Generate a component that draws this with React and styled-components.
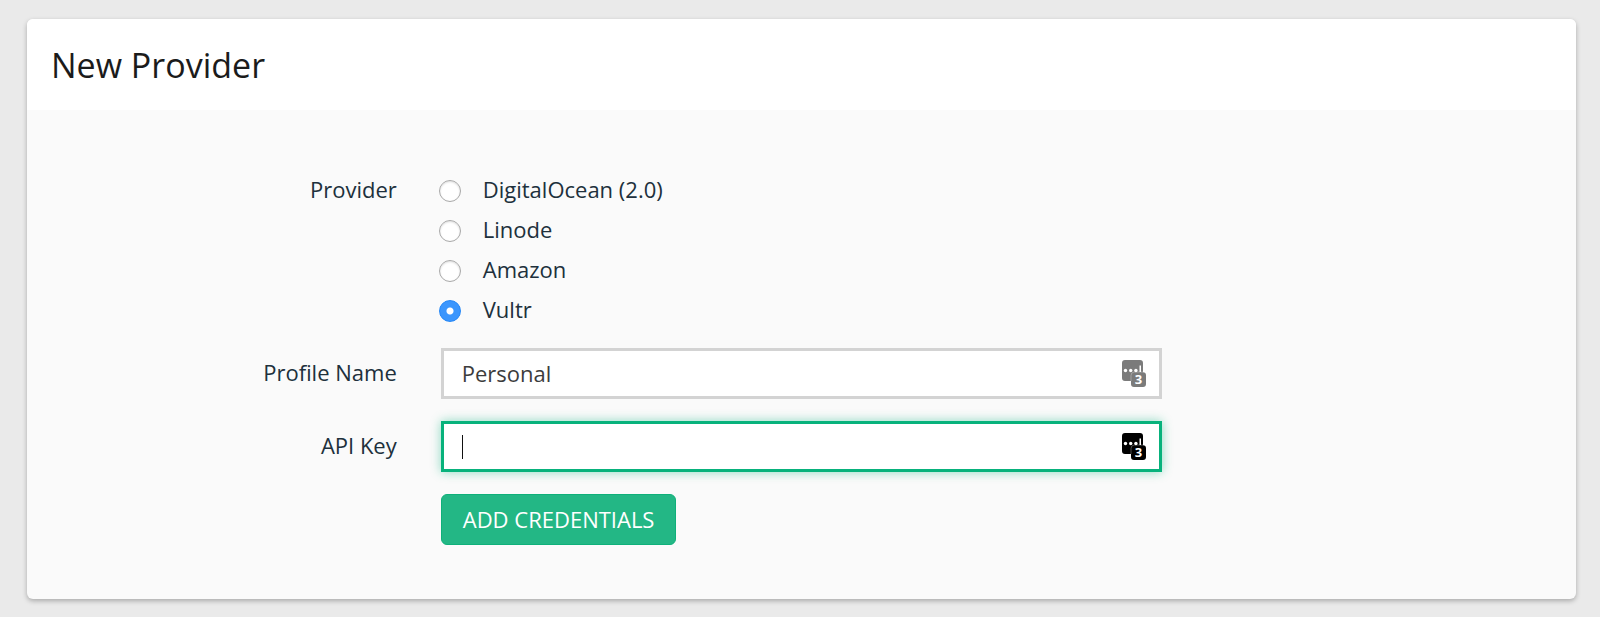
import React, { useState } from "react";
import styled, { createGlobalStyle } from "styled-components";

const GlobalStyle = createGlobalStyle`
  * {
    box-sizing: border-box;
  }

  body {
    margin: 0;
    background: #eaeaea;
    color: #20303c;
    font-family: "Open Sans", "Liberation Sans", sans-serif;
    font-size: 22px;
    line-height: 32px;
  }
`;

const Page = styled.main`
  padding: 19px 24px 18px 27px;
`;

const Card = styled.section`
  overflow: hidden;
  border-radius: 6px;
  background: #fafafa;
  box-shadow: 0 2px 5px rgba(0, 0, 0, 0.28);
`;

const CardHeader = styled.header`
  padding: 22px 24px 21px;
  background: #fff;
`;

const Title = styled.h1`
  margin: 0;
  color: #1b1b1b;
  font-size: 34px;
  font-weight: 400;
  line-height: 48px;
`;

const Form = styled.form`
  display: flex;
  flex-direction: column;
  gap: 22px;
  padding: 59px 9px 54px;
`;

const Row = styled.div`
  display: grid;
  grid-template-columns: 3fr 6fr 3fr;
  column-gap: 44px;
  align-items: center;
`;

const RadioRow = styled(Row)`
  align-items: start;
`;

const Label = styled.label`
  padding-bottom: 3px;
  line-height: 40px;
  text-align: right;
`;

const RadioList = styled.div`
  display: flex;
  flex-direction: column;
  margin-bottom: -3px;
`;

const RadioLabel = styled.label`
  display: flex;
  align-items: center;
  gap: 22px;
  align-self: flex-start;
  line-height: 40px;
`;

const Radio = styled.input`
  appearance: none;
  width: 22px;
  height: 22px;
  margin: 4px 0 0 -2px;
  border: 1px solid #a9a9a9;
  border-radius: 50%;
  background: #fff;
  box-shadow: inset 0 1px 2px rgba(0, 0, 0, 0.14);

  &:checked {
    border-color: #2387f7;
    background: radial-gradient(circle, #fff 3px, #3b96fd 4px);
    box-shadow: none;
  }
`;

const Caret = styled.span`
  display: none;
  width: 1px;
  height: 24px;
  margin-right: -1px;
  background: #111;
`;

const Field = styled.div`
  display: flex;
  align-items: center;
  height: 51px;
  padding: 0 13px 0 18px;
  border: 3px solid #d3d3d3;
  background: #fff;
  color: #7b7b7b;

  &:focus-within {
    border-color: #08b27c;
    box-shadow: 0 0 10px rgba(8, 178, 124, 0.45);
    color: #000;
  }

  &:focus-within ${Caret} {
    display: block;
  }
`;

const Input = styled.input`
  flex: 1;
  min-width: 0;
  height: 32px;
  padding: 0 0 2px;
  border: none;
  outline: none;
  background: transparent;
  color: #3c3c3c;
  caret-color: ${({ value }) => (value ? "#111" : "transparent")};
  font: inherit;
`;

const Badge = styled.svg`
  flex: none;
  width: 24px;
  height: 27px;
  overflow: visible;
`;

const BadgeText = styled.text`
  fill: #fff;
  font-family: "Open Sans", sans-serif;
  font-size: 13px;
  font-weight: 700;
`;

const SubmitButton = styled.button`
  grid-column: 2;
  justify-self: start;
  height: 51px;
  padding: 0 21px 2px;
  border: 1px solid #0fb07a;
  border-radius: 6px;
  background: #23b785;
  color: #fff;
  font: inherit;
  font-weight: 500;
  text-transform: uppercase;
`;

const providers = ["DigitalOcean (2.0)", "Linode", "Amazon", "Vultr"];

function PasswordBadge() {
  return (
    <Badge viewBox="0 0 24 27" aria-hidden="true">
      <path
        fill="currentColor"
        d="M3 0h15a3 3 0 0 1 3 3v9.200a3 3 0 0 1 3 3V24a3 3 0 0 1-3 3h-9a3 3 0 0 1-3-3v-3H3a3 3 0 0 1-3-3V3a3 3 0 0 1 3-3z"
      />
      <path
        fill="none"
        stroke="#fff"
        strokeWidth="1"
        opacity="0.3"
        d="M9 21v-5.500a3.500 3.500 0 0 1 3.500-3.500H21"
      />
      <circle cx="3.500" cy="10.500" r="1.700" fill="#fff" />
      <circle cx="8.700" cy="10.500" r="1.700" fill="#fff" />
      <circle cx="13.900" cy="10.500" r="1.700" fill="#fff" />
      <path fill="#fff" d="M17.500 5.500h1.500v6.500h-1.500z" />
      <BadgeText x="16.500" y="24" textAnchor="middle">
        3
      </BadgeText>
    </Badge>
  );
}

export default function App() {
  const [provider, setProvider] = useState("Vultr");
  const [profileName, setProfileName] = useState("Personal");
  const [apiKey, setApiKey] = useState("");

  const handleSubmit = (e) => {
    e.preventDefault();
  };

  return (
    <>
      <GlobalStyle />
      <Page>
        <Card>
          <CardHeader>
            <Title>New Provider</Title>
          </CardHeader>
          <Form onSubmit={handleSubmit}>
            <RadioRow role="radiogroup" aria-labelledby="provider-label">
              <Label as="span" id="provider-label">
                Provider
              </Label>
              <RadioList>
                {providers.map((name) => (
                  <RadioLabel key={name}>
                    <Radio
                      type="radio"
                      name="provider"
                      value={name}
                      checked={provider === name}
                      onChange={() => setProvider(name)}
                    />
                    {name}
                  </RadioLabel>
                ))}
              </RadioList>
            </RadioRow>
            <Row>
              <Label htmlFor="profile-name">Profile Name</Label>
              <Field>
                <Input
                  id="profile-name"
                  type="text"
                  value={profileName}
                  onChange={(e) => setProfileName(e.target.value)}
                />
                <PasswordBadge />
              </Field>
            </Row>
            <Row>
              <Label htmlFor="api-key">API Key</Label>
              <Field>
                {!apiKey && <Caret />}
                <Input
                  id="api-key"
                  type="text"
                  value={apiKey}
                  onChange={(e) => setApiKey(e.target.value)}
                  autoFocus
                />
                <PasswordBadge />
              </Field>
            </Row>
            <Row>
              <SubmitButton type="submit">Add Credentials</SubmitButton>
            </Row>
          </Form>
        </Card>
      </Page>
    </>
  );
}
